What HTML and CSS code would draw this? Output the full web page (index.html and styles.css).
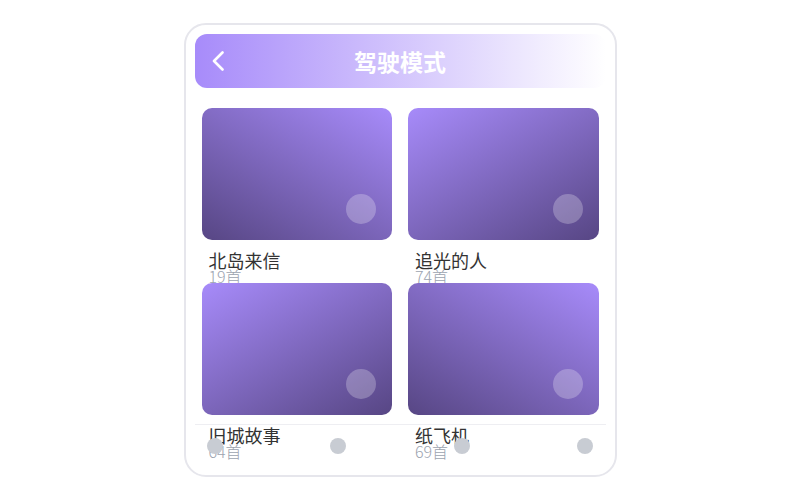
FILE: index.html
```html
<!DOCTYPE html>
<html lang="zh">
<head>
<meta charset="UTF-8" />
<meta name="viewport" content="width=device-width, initial-scale=1.0">
<title>驾驶模式</title>
<link rel="stylesheet" href="styles.css">
</head>
<body>

  <!-- phone frame -->
  <main class="phone">

    <!-- top bar -->
    <header class="topbar">
      <span class="back">
        <svg width="12" height="20" viewBox="0 0 12 20"><polyline points="10.5,1.5 2,10 10.5,18.5" fill="none" stroke="#fff" stroke-width="2.6" stroke-linecap="round" stroke-linejoin="round"/></svg>
      </span>
      <h1 class="title">驾驶模式</h1>
      <span></span>
    </header>

    <!-- playlist grid -->
    <section class="grid">
      <div class="item">
        <div class="cover cover-a"><span class="knob"></span></div>
        <div class="caption">
          <p class="name">北岛来信</p>
          <p class="count">19首</p>
        </div>
      </div>
      <div class="item">
        <div class="cover cover-b"><span class="knob"></span></div>
        <div class="caption">
          <p class="name">追光的人</p>
          <p class="count">74首</p>
        </div>
      </div>
      <div class="item">
        <div class="cover cover-b"><span class="knob"></span></div>
        <div class="caption">
          <p class="name">旧城故事</p>
          <p class="count">64首</p>
        </div>
      </div>
      <div class="item">
        <div class="cover cover-a"><span class="knob"></span></div>
        <div class="caption">
          <p class="name">纸飞机</p>
          <p class="count">69首</p>
        </div>
      </div>
    </section>

    <!-- bottom bar, lies over the list -->
    <nav class="tabbar">
      <span class="dot"></span>
      <span class="dot"></span>
      <span class="dot"></span>
      <span class="dot"></span>
    </nav>

  </main>

</body>
</html>
```

FILE: styles.css
```css
/* page */
body
{
  margin: 0;
  background: #fff;
  font-family: "Noto Sans CJK SC", "Noto Sans", sans-serif;
}
/* phone frame */
.phone
{
  position: relative;
  box-sizing: border-box;
  width: 433px;
  height: 454px;
  margin: 23px auto 0;
  padding: 9px;
  border: 2px solid #e6e6ec;
  border-radius: 22px;
  overflow: hidden;
}
/* header with fading gradient */
.topbar
{
  display: grid;
  grid-template-columns: 1fr auto 1fr;
  align-items: center;
  height: 54px;
  padding: 0 17px;
  border-radius: 12px;
  background: linear-gradient(to right, #a78bfa, #ffffff);
}
.back
{
  display: flex;
  align-items: center;
}
.title
{
  margin: 0;
  color: #fff;
  font-size: 23px;
  font-weight: 700;
  line-height: 1;
}
/* two column list */
.grid
{
  display: grid;
  grid-template-columns: 1fr 1fr;
  grid-auto-rows: 175px;
  column-gap: 16px;
  margin-top: 20px;
  padding: 0 7px;
}
/* cover card */
.cover
{
  position: relative;
  height: 132px;
  border-radius: 10px;
}
.cover-a
{
  background: linear-gradient(210deg, #a78bfa, #574684);
}
.cover-b
{
  background: linear-gradient(150deg, #a78bfa, #574684);
}
/* play knob in corner */
.knob
{
  position: absolute;
  right: 16px;
  bottom: 16px;
  width: 30px;
  height: 30px;
  border-radius: 50%;
  background: rgba(255, 255, 255, 0.25);
}
/* title and count under cover */
.caption
{
  padding: 11px 7px 0;
}
.caption p
{
  margin: 0;
}
.name
{
  color: #333;
  font-size: 18px;
  font-weight: 400;
  line-height: 18px;
}
.count
{
  color: #9ca3af;
  font-size: 16px;
  font-weight: 300;
  line-height: 15px;
}
/* bottom tab bar */
.tabbar
{
  position: absolute;
  left: 9px;
  right: 9px;
  bottom: 9px;
  height: 41px;
  display: flex;
  justify-content: space-between;
  align-items: center;
  padding: 0 12px;
  border-top: 1px solid #eeeef2;
}
.dot
{
  width: 16px;
  height: 16px;
  border-radius: 50%;
  background: #c8ccd3;
}
```
